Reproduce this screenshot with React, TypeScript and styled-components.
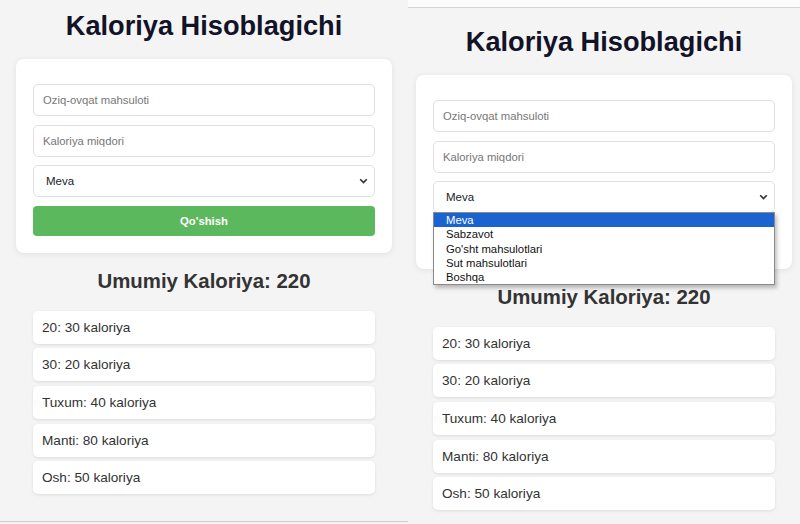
import React from "react";
import styled, { createGlobalStyle } from "styled-components";

type Entry = { name: string; kcal: number };

const CATEGORIES = ["Meva", "Sabzavot", "Go'sht mahsulotlari", "Sut mahsulotlari", "Boshqa"];

const ENTRIES: Entry[] = [
  { name: "20", kcal: 30 },
  { name: "30", kcal: 20 },
  { name: "Tuxum", kcal: 40 },
  { name: "Manti", kcal: 80 },
  { name: "Osh", kcal: 50 },
];

const GlobalStyle = createGlobalStyle`
  html, body {
    margin: 0;
    padding: 0;
    background: #f4f4f4;
  }
  * { box-sizing: border-box; }
  body {
    font-family: "Liberation Sans", Arial, sans-serif;
  }
`;

const Shots = styled.div`
  display: flex;
  width: 800px;
  height: 524px;
  overflow: hidden;
  background: #f4f4f4;
`;

const Shot = styled.section<{ $side: "left" | "right" }>`
  display: flex;
  flex-direction: column;
  align-items: center;
  flex: none;
  width: ${p => (p.$side === "left" ? 408 : 392)}px;
  height: ${p => (p.$side === "left" ? "522px" : "auto")};
  padding-top: ${p => (p.$side === "left" ? 10 : 18)}px;
  margin-top: ${p => (p.$side === "left" ? 0 : 7)}px;
  background: #f4f4f4;
  border-bottom: ${p => (p.$side === "left" ? "1px solid #cdcdcd" : "none")};
  border-top: ${p => (p.$side === "right" ? "1px solid #d3d3d3" : "none")};
  box-shadow: ${p => (p.$side === "right" ? "0 -7px 0 #fbfbfb" : "none")};
`;

const Title = styled.h1`
  margin: 0 0 18px;
  font-size: 27.2px;
  line-height: 31px;
  font-weight: 700;
  color: #121229;
  text-align: center;
`;

const Card = styled.div`
  width: 376px;
  display: flex;
  flex-direction: column;
  gap: 8.6px;
  padding: 25px 17px 17px;
  background: #fff;
  border-radius: 8px;
  box-shadow: 0 1px 6px rgba(0, 0, 0, 0.08);
`;

const Field = styled.input`
  height: 32px;
  width: 100%;
  padding: 0 9px;
  border: 1px solid #e0e0e0;
  border-radius: 5px;
  font-family: inherit;
  font-size: 11.3px;
  color: #222;
  background: #fff;
  outline: none;
  &::placeholder {
    color: #777;
  }
`;

const PickerWrap = styled.div`
  position: relative;
`;

const PickerBox = styled.div`
  display: flex;
  align-items: center;
  justify-content: space-between;
  height: 32px;
  padding: 0 6px 0 12px;
  border: 1px solid #e0e0e0;
  border-radius: 5px;
  background: #fff;
  font-size: 11.5px;
  color: #222;
`;

const OptionList = styled.ul`
  position: absolute;
  top: calc(100% - 1px);
  left: 0;
  right: 0;
  z-index: 5;
  margin: 0;
  padding: 0;
  list-style: none;
  background: #fff;
  border: 1px solid #8a8a8a;
  box-shadow: 2px 3px 4px rgba(0, 0, 0, 0.25);
`;

const Option = styled.li<{ $active?: boolean }>`
  height: 14.2px;
  line-height: 14.2px;
  padding: 0 12px;
  font-size: 11.3px;
  color: ${p => (p.$active ? "#fff" : "#111")};
  background: ${p => (p.$active ? "#1b63d1" : "transparent")};
`;

const AddButton = styled.button`
  height: 30px;
  width: 100%;
  border: none;
  border-radius: 4px;
  background: #5cb85c;
  color: #fff;
  font-family: inherit;
  font-size: 11.3px;
  font-weight: 700;
  cursor: pointer;
`;

const Total = styled.h2`
  margin: 17px 0 18px;
  font-size: 20.4px;
  line-height: 23px;
  font-weight: 700;
  color: #333;
  text-align: center;
`;

const List = styled.ul`
  width: 342px;
  margin: 0;
  padding: 0;
  list-style: none;
  display: flex;
  flex-direction: column;
  gap: 4.6px;
`;

const Item = styled.li`
  height: 33px;
  display: flex;
  align-items: center;
  padding: 0 9px;
  background: #fff;
  border-radius: 5px;
  box-shadow: 0 1px 3px rgba(0, 0, 0, 0.1);
  font-size: 13.6px;
  color: #333;
`;

const Chevron = () => (
  <svg width="9" height="6" viewBox="0 0 9 6">
    <path d="M1.2 1.2l3.3 3.3 3.3-3.3" fill="none" stroke="#333" strokeWidth="1.6" />
  </svg>
);

const Picker = ({ value, open }: { value: string; open?: boolean }) => (
  <PickerWrap>
    <PickerBox>
      <span>{value}</span>
      <Chevron />
    </PickerBox>
    {open && (
      <OptionList>
        {CATEGORIES.map(c => (
          <Option key={c} $active={c === value}>
            {c}
          </Option>
        ))}
      </OptionList>
    )}
  </PickerWrap>
);

const Calculator = ({ side }: { side: "left" | "right" }) => {
  const total = ENTRIES.reduce((sum, e) => sum + e.kcal, 0);
  return (
    <Shot $side={side}>
      <Title>Kaloriya Hisoblagichi</Title>
      <Card>
        <Field placeholder="Oziq-ovqat mahsuloti" />
        <Field placeholder="Kaloriya miqdori" />
        <Picker value="Meva" open={side === "right"} />
        <AddButton>Qo'shish</AddButton>
      </Card>
      <Total>Umumiy Kaloriya: {total}</Total>
      <List>
        {ENTRIES.map(e => (
          <Item key={e.name}>
            {e.name}: {e.kcal} kaloriya
          </Item>
        ))}
      </List>
    </Shot>
  );
};

const App: React.FC = () => (
  <>
    <GlobalStyle />
    <Shots>
      <Calculator side="left" />
      <Calculator side="right" />
    </Shots>
  </>
);

export default App;
